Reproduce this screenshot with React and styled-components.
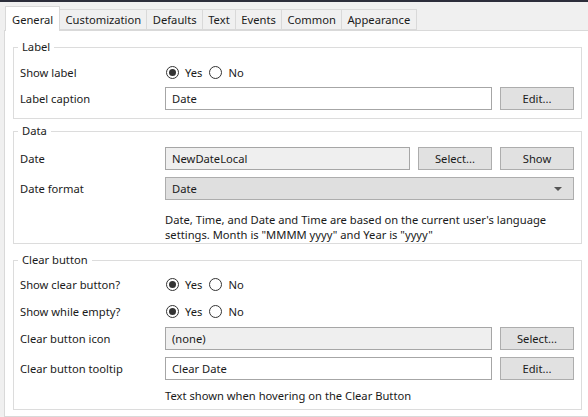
import { Component } from "react";
import styled, { createGlobalStyle } from "styled-components";

const GlobalStyle = createGlobalStyle`
  html, body {
    margin: 0;
    padding: 0;
    background: #f0f0f0;
    overflow: hidden;
  }
  body {
    font-family: "Noto Sans", "Open Sans", sans-serif;
    font-size: 11.2px;
    color: #1a1a1a;
  }
`;

const Window = styled.div`
  width: 588px;
  height: 417px;
  overflow: hidden;
  display: flex;
  flex-direction: column;
`;

const TopBar = styled.div`
  height: 2px;
  background: #2c2e3b;
  flex: none;
`;

const TabStrip = styled.div`
  display: flex;
  align-items: flex-end;
  height: 28px;
  padding-left: 5px;
  flex: none;
  position: relative;
  z-index: 1;
`;

const Tab = styled.div`
  box-sizing: border-box;
  height: ${p => (p.$active ? "25px" : "21px")};
  margin-bottom: ${p => (p.$active ? "-1px" : "0")};
  margin-left: -1px;
  padding: 0 ${p => (p.$active ? "6px" : "5.3px")};
  display: flex;
  align-items: center;
  justify-content: center;
  border: 1px solid #d9d9d9;
  border-bottom: ${p => (p.$active ? "none" : "1px solid #d9d9d9")};
  background: ${p => (p.$active ? "#ffffff" : "#f0f0f0")};
  white-space: nowrap;
  &:first-child {
    margin-left: 0;
  }
`;

const Panel = styled.div`
  box-sizing: border-box;
  flex: 1;
  width: 640px;
  margin-left: 4px;
  background: #fff;
  border: 1px solid #d9d9d9;
  padding: 8px 0 0 8px;
`;

const Group = styled.fieldset`
  box-sizing: border-box;
  width: 569px;
  margin: 0 0 ${p => p.$mb ?? 4}px 0;
  padding: 0 7px ${p => p.$pb ?? 7}px 6px;
  border: 1px solid #dcdcdc;
`;

const Legend = styled.legend`
  margin-left: -2px;
  padding: 0 4px;
  line-height: 16px;
`;

const Row = styled.div`
  display: flex;
  align-items: center;
  height: 23px;
  margin-top: ${p => p.$mt ?? 4}px;
`;

const RowLabel = styled.div`
  width: 145px;
  flex: none;
  white-space: nowrap;
`;

const Field = styled.div`
  box-sizing: border-box;
  flex: 1;
  height: 23px;
  display: flex;
  align-items: center;
  padding: 0 6px;
  border: 1px solid ${p => (p.$variant === "combo" ? "#adadad" : "#a6a6a6")};
  background: ${p =>
    p.$variant === "readonly" ? "#efefef" : p.$variant === "combo" ? "#dfdfdf" : "#fff"};
  position: relative;
`;

const ComboArrow = styled.span`
  position: absolute;
  right: 11px;
  top: 9px;
  width: 0;
  height: 0;
  border-left: 4px solid transparent;
  border-right: 4px solid transparent;
  border-top: 4px solid #555;
`;

const Button = styled.div`
  box-sizing: border-box;
  width: 74px;
  height: 23px;
  flex: none;
  margin-left: 8px;
  display: flex;
  align-items: center;
  justify-content: center;
  background: #e1e1e1;
  border: 1px solid #adadad;
`;

const RadioGroup = styled.div`
  display: flex;
  align-items: center;
  padding-left: 1px;
`;

const RadioOption = styled.label`
  display: flex;
  align-items: center;
  margin-right: 7px;
`;

const RadioCircle = styled.span`
  box-sizing: border-box;
  width: 13px;
  height: 13px;
  border-radius: 50%;
  border: 1px solid #333;
  margin-right: 6px;
  display: flex;
  align-items: center;
  justify-content: center;
  &::after {
    content: "";
    width: 7px;
    height: 7px;
    border-radius: 50%;
    background: ${p => (p.$checked ? "#333" : "transparent")};
  }
`;

const HelpText = styled.div`
  margin-left: 145px;
  line-height: 15px;
  padding-top: ${p => p.$pt ?? 8}px;
`;

const tabs = ["General", "Customization", "Defaults", "Text", "Events", "Common", "Appearance"];

class YesNo extends Component {
  render() {
    return (
      <RadioGroup>
        <RadioOption>
          <RadioCircle $checked />
          Yes
        </RadioOption>
        <RadioOption>
          <RadioCircle />
          No
        </RadioOption>
      </RadioGroup>
    );
  }
}

export default class App extends Component {
  render() {
    return (
      <Window>
        <GlobalStyle />
        <TopBar />
        <TabStrip>
          {tabs.map((t, i) => (
            <Tab key={t} $active={i === 0}>{t}</Tab>
          ))}
        </TabStrip>
        <Panel>
          <Group $mb={4} $pb={8}>
            <Legend>Label</Legend>
            <Row $mt={6}>
              <RowLabel>Show label</RowLabel>
              <YesNo />
            </Row>
            <Row $mt={3}>
              <RowLabel>Label caption</RowLabel>
              <Field>Date</Field>
              <Button>Edit...</Button>
            </Row>
          </Group>

          <Group $pb={1} $mb={8}>
            <Legend>Data</Legend>
            <Row $mt={8}>
              <RowLabel>Date</RowLabel>
              <Field $variant="readonly">NewDateLocal</Field>
              <Button>Select...</Button>
              <Button>Show</Button>
            </Row>
            <Row $mt={7}>
              <RowLabel>Date format</RowLabel>
              <Field $variant="combo">
                Date
                <ComboArrow />
              </Field>
            </Row>
            <HelpText $pt={12}>
              Date, Time, and Date and Time are based on the current user's language
              <br />
              settings. Month is "MMMM yyyy" and Year is "yyyy"
            </HelpText>
          </Group>

          <Group $pb={6}>
            <Legend>Clear button</Legend>
            <Row $mt={5}>
              <RowLabel>Show clear button?</RowLabel>
              <YesNo />
            </Row>
            <Row>
              <RowLabel>Show while empty?</RowLabel>
              <YesNo />
            </Row>
            <Row>
              <RowLabel>Clear button icon</RowLabel>
              <Field $variant="readonly">(none)</Field>
              <Button>Select...</Button>
            </Row>
            <Row $mt={7}>
              <RowLabel>Clear button tooltip</RowLabel>
              <Field>Clear Date</Field>
              <Button>Edit...</Button>
            </Row>
            <HelpText $pt={8}>Text shown when hovering on the Clear Button</HelpText>
          </Group>
        </Panel>
      </Window>
    );
  }
}
